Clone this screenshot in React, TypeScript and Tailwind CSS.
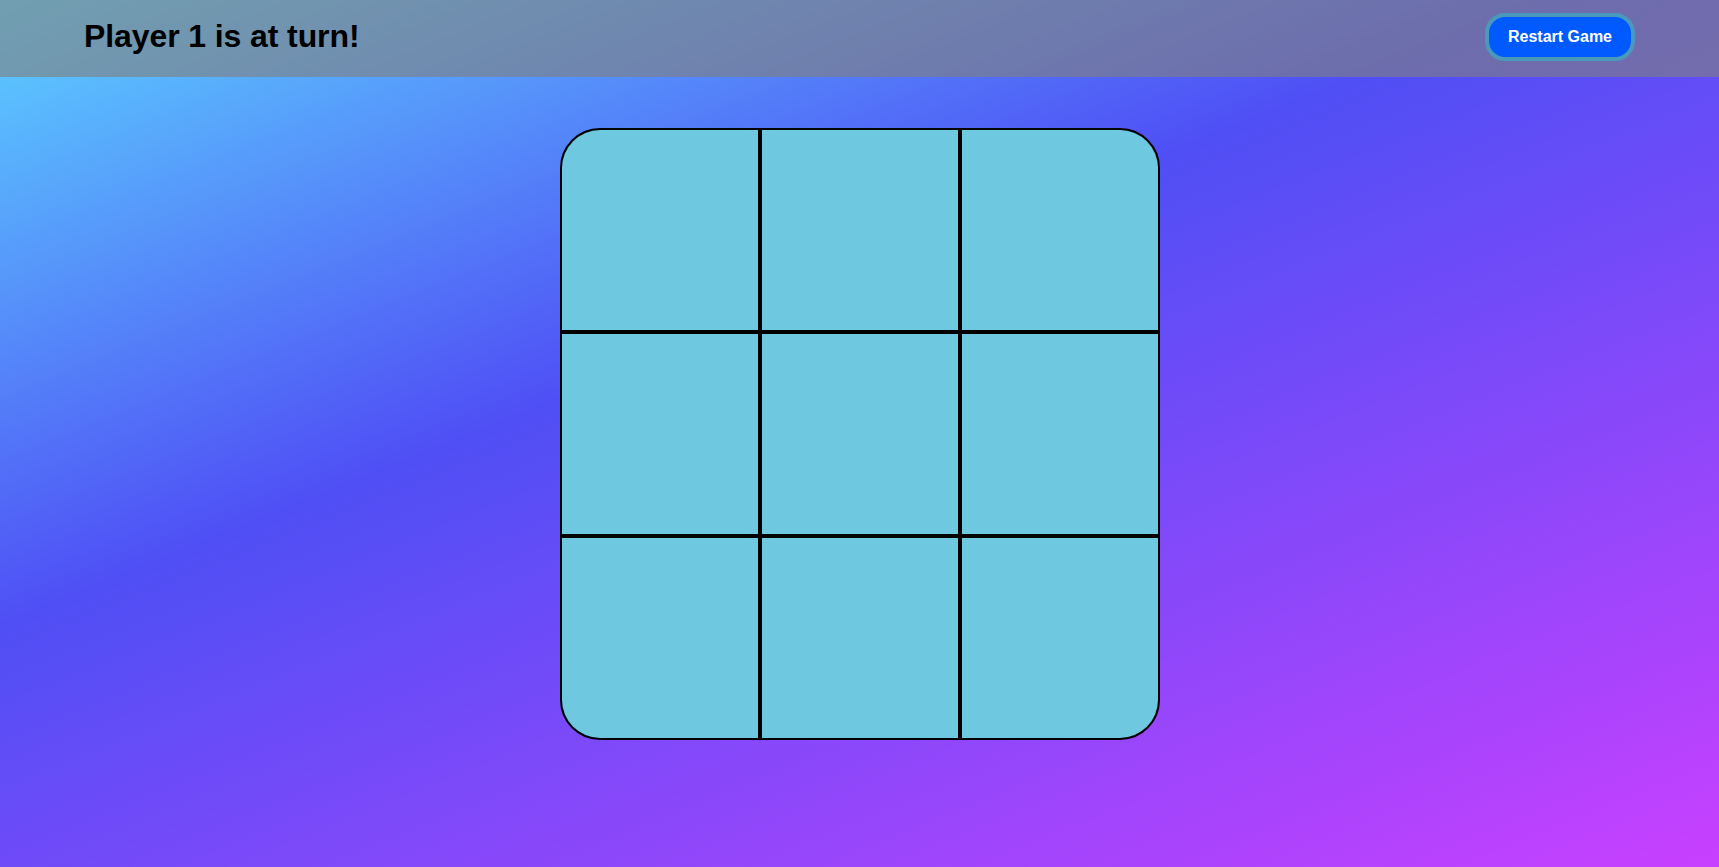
import { useState } from 'react';

type Cell = 'X' | 'O' | null;

export default function App() {
  const [cells, setCells] = useState<Cell[]>(Array(9).fill(null));
  const [player, setPlayer] = useState<1 | 2>(1);

  const play = (i: number) => {
    if (cells[i]) return;
    const next = [...cells];
    next[i] = player === 1 ? 'X' : 'O';
    setCells(next);
    setPlayer(player === 1 ? 2 : 1);
  };

  const restart = () => {
    setCells(Array(9).fill(null));
    setPlayer(1);
  };

  return (
    <div
      className="min-h-screen w-full bg-[linear-gradient(158deg,#5cd2ff_0%,#4f4ff5_40%,#c840ff_100%)]"
      style={{ fontFamily: '"Liberation Sans", Arial, sans-serif' }}
    >
      {/* Header */}
      <header className="h-[77px] flex items-center justify-between px-[84px] bg-[rgba(128,128,128,0.62)]">
        <h1 className="text-[32px] font-bold text-black leading-none -mt-[5px] tracking-[-0.1px]">
          Player {player} is at turn!
        </h1>
        <button
          onClick={restart}
          className="h-[48px] px-[19px] -mt-[4px] rounded-[20px] border-4 border-[#4a98bc] bg-[#005aff] text-white text-base font-bold"
        >
          Restart Game
        </button>
      </header>

      {/* Board */}
      <main className="flex justify-center pt-[51px] pb-[50px]">
        <div className="w-[600px] h-[612px] border-2 border-black rounded-[40px] overflow-hidden bg-black">
          <div className="grid grid-cols-3 grid-rows-3 gap-[4px] w-full h-full">
            {cells.map((c, i) => (
              <button
                key={i}
                onClick={() => play(i)}
                className="bg-[#6dc8e0] flex items-center justify-center text-7xl font-bold text-black"
              >
                {c}
              </button>
            ))}
          </div>
        </div>
      </main>
    </div>
  );
}
